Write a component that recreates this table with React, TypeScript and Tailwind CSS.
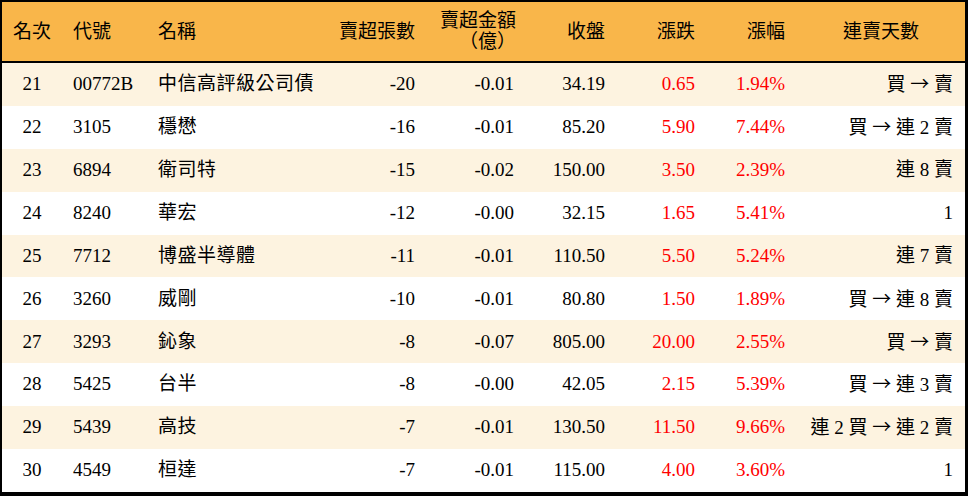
import React from "react";

const rows = [
  ["21", "00772B", "中信高評級公司債", "-20", "-0.01", "34.19", "0.65", "1.94%", "買 → 賣"],
  ["22", "3105", "穩懋", "-16", "-0.01", "85.20", "5.90", "7.44%", "買 → 連 2 賣"],
  ["23", "6894", "衛司特", "-15", "-0.02", "150.00", "3.50", "2.39%", "連 8 賣"],
  ["24", "8240", "華宏", "-12", "-0.00", "32.15", "1.65", "5.41%", "1"],
  ["25", "7712", "博盛半導體", "-11", "-0.01", "110.50", "5.50", "5.24%", "連 7 賣"],
  ["26", "3260", "威剛", "-10", "-0.01", "80.80", "1.50", "1.89%", "買 → 連 8 賣"],
  ["27", "3293", "鈊象", "-8", "-0.07", "805.00", "20.00", "2.55%", "買 → 賣"],
  ["28", "5425", "台半", "-8", "-0.00", "42.05", "2.15", "5.39%", "買 → 連 3 賣"],
  ["29", "5439", "高技", "-7", "-0.01", "130.50", "11.50", "9.66%", "連 2 買 → 連 2 賣"],
  ["30", "4549", "桓達", "-7", "-0.01", "115.00", "4.00", "3.60%", "1"],
];

const grid =
  "grid grid-cols-[60px_84px_184px_97px_99px_91px_90px_90px_168px]";

function Streak({ text }: { text: string }) {
  const parts = text.split("→");
  if (parts.length === 1) return <>{text}</>;
  return (
    <>
      {parts[0]}
      <span style={{ fontFamily: '"Noto Sans CJK TC", sans-serif' }}>→</span>
      {parts[1]}
    </>
  );
}

export default function App() {
  return (
    <div
      className="w-[968px] h-[496px] bg-white text-black text-[19px] border-t-2 border-l-2 border-r-[3px] border-b-4 border-black"
      style={{ fontFamily: '"Liberation Serif", "Noto Sans CJK TC", serif' }}
    >
      <div className={`${grid} h-[61px] bg-[#f9b64a] border-b-2 border-black items-center leading-[21px]`}>
        <div className="text-center">名次</div>
        <div className="pl-[11px]">代號</div>
        <div className="pl-[12px]">名稱</div>
        <div className="text-right pr-[12px]">賣超張數</div>
        <div className="text-right pr-[10px] pb-[2px]">
          賣超金額
          <br />
          （億）
        </div>
        <div className="text-right pr-[12px]">收盤</div>
        <div className="text-right pr-[12px]">漲跌</div>
        <div className="text-right pr-[12px]">漲幅</div>
        <div className="text-center">連賣天數</div>
      </div>
      {rows.map((r, i) => (
        <div
          key={r[0]}
          className={`${grid} h-[42.9px] items-center ${i % 2 === 0 ? "bg-[#fdf3e0]" : "bg-white"}`}
        >
          <div className="text-center">{r[0]}</div>
          <div className="pl-[11px]">{r[1]}</div>
          <div className="pl-[12px] tracking-[0.5px]">{r[2]}</div>
          <div className="text-right pr-[12px]">{r[3]}</div>
          <div className="text-right pr-[12px]">{r[4]}</div>
          <div className="text-right pr-[12px]">{r[5]}</div>
          <div className="text-right pr-[12px] text-[#ff0000]">{r[6]}</div>
          <div className="text-right pr-[12px] text-[#ff0000]">{r[7]}</div>
          <div className="text-right pr-[12px] whitespace-nowrap">
            <Streak text={r[8]} />
          </div>
        </div>
      ))}
    </div>
  );
}
